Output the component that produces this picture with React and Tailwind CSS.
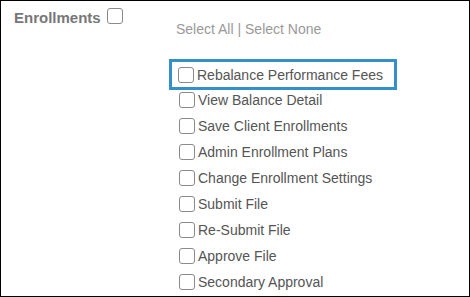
import React from "react";

const permissions = [
  "View Balance Detail",
  "Save Client Enrollments",
  "Admin Enrollment Plans",
  "Change Enrollment Settings",
  "Submit File",
  "Re-Submit File",
  "Approve File",
  "Secondary Approval",
];

// Plain square box, drawn rather than the native input so the size matches
const Box = () => (
  <span className="inline-block w-4 h-4 shrink-0 rounded-[3px] border border-[#8a8a8a] bg-white" />
);

const Row = ({ label }) => (
  <div className="flex items-center h-4 mb-[10px]">
    <Box />
    <span className="ml-[3px] text-[14px] text-[#555] leading-4 whitespace-nowrap">{label}</span>
  </div>
);

export default function App() {
  return (
    <div
      className="w-[470px] h-[297px] border border-black bg-white flex overflow-hidden"
      style={{ fontFamily: '"Liberation Sans", Arial, sans-serif' }}
    >
      {/* Left label */}
      <div className="w-[168px] pl-[13px] pt-[7px] flex items-start">
        <span className="text-[15px] font-bold text-[#777] leading-[20px]">Enrollments</span>
        <span className="ml-[6px] inline-block w-4 h-4 rounded-[3px] border border-[#8a8a8a]" />
      </div>

      {/* Permission list */}
      <div className="flex-1 pt-[20px]">
        <div className="pl-[7px] text-[14px] leading-4 text-[#999]">Select All | Select None</div>

        <div className="mt-[22px] w-[228px] border-[3px] border-[#3391c9] pl-[6px] pt-[5px] pb-[4px]">
          <div className="flex items-center h-4">
            <Box />
            <span className="ml-[3px] text-[14px] text-[#555] leading-4 whitespace-nowrap">
              Rebalance Performance Fees
            </span>
          </div>
        </div>

        <div className="mt-[2px] pl-[10px]">
          {permissions.map((p) => (
            <Row key={p} label={p} />
          ))}
        </div>
      </div>
    </div>
  );
}
